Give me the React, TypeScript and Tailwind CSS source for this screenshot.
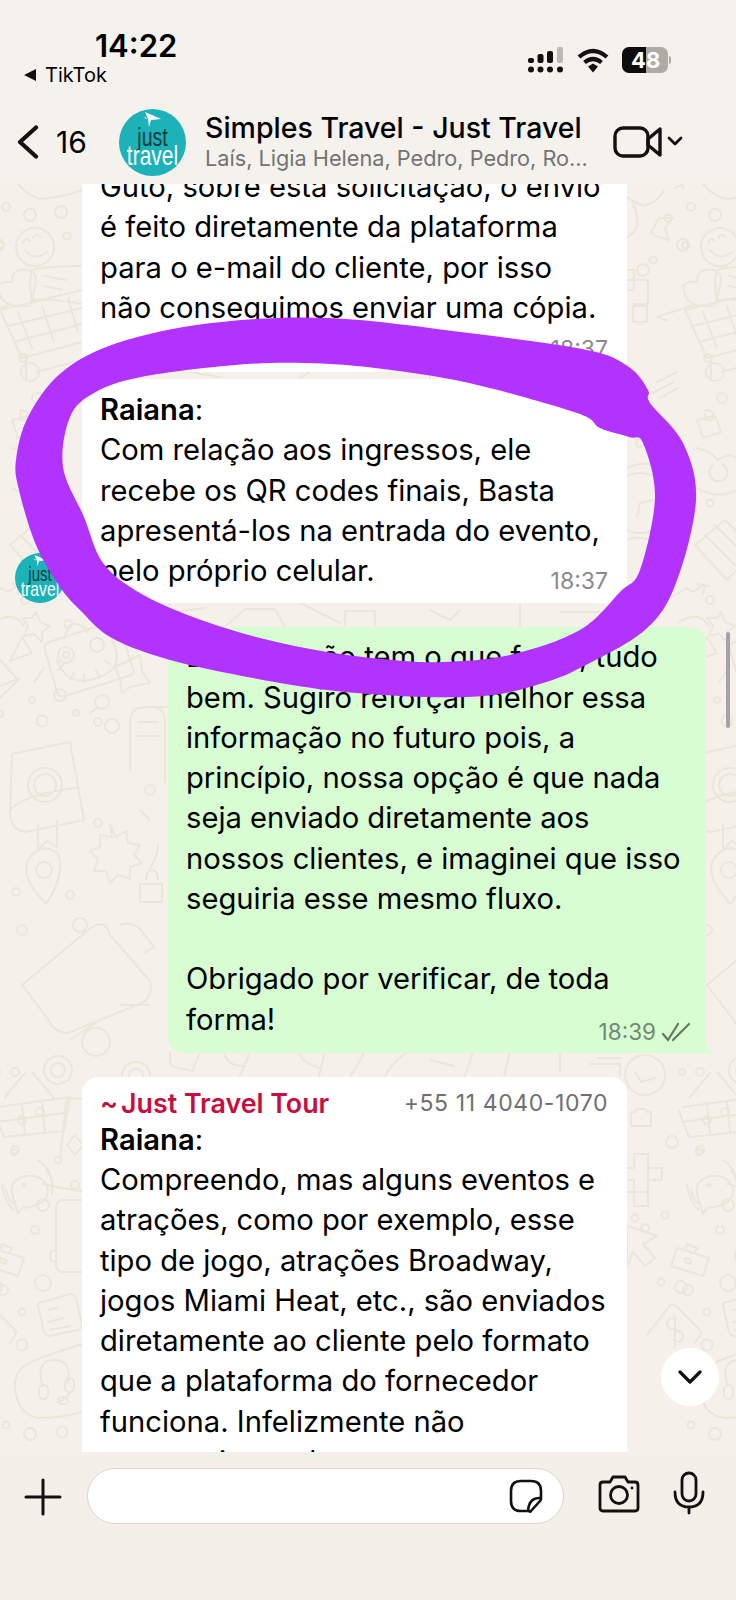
import React from "react";

const Line = ({ children }: { children: React.ReactNode }) => (
  <div className="h-[40.25px] leading-[40.25px] whitespace-nowrap">{children}</div>
);

const dots: [number, number, number][] = [
  [6, 207, 4], [30, 215, 6], [61, 212, 6], [67, 236, 3.5], [0, 245, 3], [23, 358, 4], [-32, 260, 3.5], [-42, 270, 6], [-2, 245, 6], [-17, 218, 3.5],
  [37, 398, 5], [25, 503, 3.5], [25, 600, 4], [-45, 443, 4], [32, 700, 3], [76, 713, 3], [42, 721, 5.5], [112, 726, 7], [0, 714, 3],
  [98, 722, 4], [150, 790, 5], [98, 823, 4], [22, 930, 5], [80, 925, 7], [70, 895, 4], [16, 892, 4], [22, 1120, 4], [40, 1112, 4],
  [15, 1072, 4], [15, 1150, 4], [58, 1160, 3.5], [75, 1185, 4], [43, 1205, 6], [35, 1230, 4], [43, 1283, 8], [22, 1312, 3.5], [22, 1345, 5.5], [3, 1290, 5], [6, 1425, 3.5], [30, 1434, 6], [62, 1432, 5.5],
  [-3, 1072, 3], [-13, 1142, 6], [14, 1152, 3], [-20, 1215, 3.5], [-24, 1282, 3.5], [-4, 1287, 6], [-50, 1218, 3.5], [-40, 1228, 4],
];

function Column() {
  return (
    <g>
      {dots.map((d, i) => (
        <circle key={i} cx={d[0]} cy={d[1]} r={d[2]} />
      ))}
      <path d="M-10 188q10-6 8 0M18 184q16 18 30 14 20-2 34-8" />
      <circle cx="35" cy="247" r="19" />
      <path d="M23 243q3-7 7-2M33 238q3-6 7-1M25 250q9 12 22 2" />
      <path d="M29 306q-26 2-29-12-6-14 12-12 0-14 14-12 14 0 8 20-2 12-5 16zM32 270q12-4 50-4M32 300q-4-18 0-30M32 300q20-2 50 4M44 276l22 4M44 286l18 4" />
      <path d="M0 310l82-20M0 310l22 48 60-16M18 312l14 36M42 306l12 36M68 298l10 34M8 326l74-18M14 342l68-18M26 356v24M36 372l46-12" />
      <circle cx="30" cy="372" r="9" />
      <path d="M-28 317l36-12M-18 320q-6 0-8-4" />
      <path d="M-34 232l8-14 14 0 -8 10 4 12-14-4z" />
      <path d="M-65 280h14v-10h-12M-65 290h14v-10h14v24h-14M-52 306h14v16h-14z" />
      <path d="M-65 190q10 12 24 16 14-4 20-16" />
      <path d="M-60 238q20-8 8-34" />
      <path d="M20 410q8 0 8 6v4h-8M12 420l18-4 6 16-18 6zM20 420v-4q0-6 4-6" />
      <path d="M-28 382l20-10M-25 398l18-10M-35 394l24-12" />
      <path d="M12 448q16 4 20 12 18-10 20 2M12 488q20 12 40 2M28 465a9 9 0 1 0 9-1l2 3" />
      <circle cx="-45" cy="503" r="30" />
      <path d="M-45 503l14-3M-45 503l-3 14M-60 540q20-6 30 4M-60 470q14-10 30-4" />
      <path d="M10 545l30-25 30 30-28 30zM20 535l30 30M30 525l30 30" />
      <path d="M-12 596l14-8 6 4 12-8 -2 10M12 584l12 2" />
      <path d="M-6 622q20-12 30 4" />
      <path d="M0 660l18 20-18 18M-10 690l30-12" />
      <path d="M22 637l10 16-22 8z" />
      <path d="M36 612l4 10 10 4-8 6 0 10-8-8-10 2 4-10-6-8 10 0z" />
      <path d="M49 642l62-20q6-2 8 4l14 42q2 6-4 8l-64 20q-6 2-8-4l-12-42q-2-6 4-8zM65 638q2-16 12-14 8 2 10 8M68 620a4 4 0 1 0 .1 0M44 668l-10 14" />
      <circle cx="66" cy="655" r="8" />
      <circle cx="66" cy="655" r="3" />
      <circle cx="97" cy="645" r="7" />
      <path d="M57 660q10 28 40 18t15-38M64 664l-6 6M74 672l-4 8M84 674v8M96 670l4 8M104 660l6 4" />
      <circle cx="60" cy="695" r="6" />
      <path d="M115 667l25-12 2 16 8 12-20 4-8 6-2-14z" />
      <circle cx="102" cy="702" r="7" />
      <path d="M97 708l-7 5" />
      <path d="M130 770v-48q0-15 16-15h22M152 707q13 0 13 15v60M138 722h20M138 736h20" />
      <path d="M12 754l58-12 14 78-58 12q-16-2-16-20zM10 810q14-16 66-22M38 825v24l9-8 10 6v-26" />
      <circle cx="45" cy="785" r="17" />
      <circle cx="45" cy="785" r="11" />
      <path d="M110 825l6 12 10-6 2 12 12 2-6 10 8 8-12 4 0 12-12-4-8 8-4-12-12 0 4-12-8-8 10-4 0-12 12 2z" />
      <path d="M140 810l10 10M150 868q8-12 8-24" />
      <path d="M28 860q14-20 30-6 8 20-12 50-26-26-18-44z" />
      <circle cx="44" cy="870" r="8" />
      <path d="M146 880q0-10 6-10t6 10M140 884h22v18h-22z" />
      <path d="M22 985l70-58q14-8 18 8l40 46q4 14-8 22l-74 30q-14 0-20-14l-26-34zM120 925q10-4 20 4l14 18-10 6M70 1040l30-20M120 1005h30" />
      <circle cx="58" cy="1070" r="14" />
      <circle cx="58" cy="1070" r="7" />
      <circle cx="96" cy="1042" r="14" />
      <circle cx="136" cy="1076" r="14" />
      <circle cx="136" cy="1076" r="7" />
      <path d="M60 1160l6-56q0-6 8-6l82 8q6 2 6 8l-8 66M42 1184q60 14 118 6" />
      <path d="M84 1134h44v38H84zM106 1124v48M84 1146h44M106 1122q-12-12-14 2 4 6 14-2 12-12 14 2-4 6-14-2" />
      <path d="M5 1097l20-24M32 1072l22 26M-2 1107l72-10M70 1097l-6 34-60 6-10-26M22 1105l3 30M42 1102l3 30M-3 1122l68-9" />
      <path d="M75 1135l8 10 -8 10-8-10z" />
      <path d="M14 1200q-8-20 12-24 18-2 22 14 0 16-26 18l-4 6z" />
      <path d="M46 1170q8 10 6 24M38 1160q14 10 14 24M6 1190q2 10 8 14M2 1184q2 18 12 26" />
      <circle cx="24" cy="1185" r="1.5" />
      <path d="M82 1200h-18q-8 0-8 8v56q0 8 8 8h18M56 1250q-6 0-6 6t6 6" />
      <path d="M-8 1248l32 10-6 18-32-10zM0 1250l2-6 10 4-2 4M0 1258l6 2v4l-6-2z" />
      <path d="M42 1302l28-8q4 0 6 4l6 26q0 4-4 6l-28 6q-4 0-6-4l-6-26q0-4 4-4zM48 1310l10-2M48 1322l16-4M50 1330l20-4" />
      <path d="M82 1344q-50 16-58 22-12 10-8 28 4 22 24 24 20 0 42-6" />
      <path d="M42 1384q-6-24 12-24t14 22" />
      <rect x="39" y="1385" width="9" height="14" rx="4.5" />
      <rect x="65" y="1378" width="9" height="14" rx="4.5" />
      <path d="M70 1392q-4 8-12 10" />
      <rect x="58" y="1397" width="10" height="7" rx="3.5" />
      <path d="M-38 1335l22-28q4-4 8 0l22 22q4 4 0 8l-4 6M-8 1320q-8-4-10 2t8 8 8 8-10 2M-10 1316v30" />
      <path d="M-58 1226l30 10-14 8 12 14-10 8-12-14-6 14z" />
      <path d="M-65 1168h14v-14h14v14h14v12h-14v-12M-37 1180v12h-14v-12M-65 1180h14M-65 1192h14v14h14v-14" />
      <circle cx="-40" cy="1075" r="20" />
      <path d="M-50 1072l6 10 14-4" />
      <path d="M-54 1112h4l2-3h8l2 3h4v14h-20z" />
    </g>
  );
}

function Doodles() {
  return (
    <svg className="absolute inset-0" width="736" height="1268" viewBox="0 184 736 1268" fill="none" stroke="#ece5da" strokeWidth="2" strokeLinecap="round" strokeLinejoin="round">
      <Column />
      <g transform="translate(685 0)">
        <Column />
      </g>
      <path d="M85 376l20 2M190 372l30 5M310 372l-10 6M430 373v6M530 374l10 5" />
      <path d="M175 612l30-4M225 627l20-18h30l10 18M300 603l40 20M345 627v-16h30v16M430 610l20 10 10-10M520 605v22M560 612h40v15" />
      <path d="M170 1052v10q0 6 20 8M200 1052l-8 20M225 1052q0 14 20 14M250 1052l-10 24M300 1052q0 10 20 16M325 1052l-6 24M350 1076q8-10 14-24M385 1076q6-12 22-24M430 1060l24 6M465 1076l8-24M510 1052l-6 24M560 1052v20M590 1064h30v12M598 1058h22" />
    </svg>
  );
}

function Avatar({ size }: { size: "lg" | "sm" }) {
  const lg = size === "lg";
  return (
    <div className={lg ? "relative w-[67px] h-[67px] rounded-full bg-[#1cb2b7] overflow-hidden shrink-0 text-white" : "relative w-[50px] h-[50px] rounded-full bg-[#1cb2b7] overflow-hidden shrink-0 text-white"}>
      <svg className={lg ? "absolute left-[24px] top-[2px] w-[20px] h-[18px]" : "absolute left-[18px] top-[1px] w-[15px] h-[14px]"} viewBox="0 0 20 18" fill="#ffffff">
        <path d="M2 1l16 7-10 1-2 7-1-8zM1 6l3 1-1 1z" />
      </svg>
      <div className={lg ? "absolute left-0 right-0 top-[15px] text-center text-[26px] leading-[26px] scale-x-75 text-[#0f3a3d] font-['Liberation_Sans',sans-serif]" : "absolute left-0 right-0 top-[11px] text-center text-[20px] leading-[20px] scale-x-75 text-[#0f3a3d] font-['Liberation_Sans',sans-serif]"}>just</div>
      <div className={lg ? "absolute left-[-6px] right-[-6px] top-[33px] text-center text-[28px] leading-[28px] scale-x-75 font-['Liberation_Sans',sans-serif]" : "absolute left-[-6px] right-[-6px] top-[25px] text-center text-[21px] leading-[21px] scale-x-75 font-['Liberation_Sans',sans-serif]"}>travel</div>
    </div>
  );
}

type P = [number, number];

const outerEdge: P[] = [
  [648, 390], [629, 367], [587, 350], [469, 333], [329, 318], [211, 323], [117, 343], [61, 373], [28, 417], [16, 460], [19, 490],
  [36, 545], [60, 587], [80, 610], [110, 637], [160, 657], [227, 673], [327, 690], [427, 697], [493, 695], [543, 683], [580, 668], [645, 630],
  [676, 583], [696, 500], [683, 443], [650, 403],
];
const innerEdge: P[] = [
  [643, 443], [655, 497], [640, 570], [620, 592], [580, 630], [510, 655], [443, 662], [393, 660], [327, 652], [260, 638], [193, 617], [140, 593], [103, 563], [84, 517],
  [63, 467], [70, 417], [94, 393], [141, 377], [235, 365], [305, 363], [375, 368], [469, 383], [577, 413], [600, 428], [629, 437],
];

function smooth(pts: P[]): string {
  const n = pts.length;
  let d = `M${pts[0][0]} ${pts[0][1]}`;
  for (let i = 0; i < n; i++) {
    const p0 = pts[(i - 1 + n) % n];
    const p1 = pts[i];
    const p2 = pts[(i + 1) % n];
    const p3 = pts[(i + 2) % n];
    const c1x = p1[0] + (p2[0] - p0[0]) / 6;
    const c1y = p1[1] + (p2[1] - p0[1]) / 6;
    const c2x = p2[0] - (p3[0] - p1[0]) / 6;
    const c2y = p2[1] - (p3[1] - p1[1]) / 6;
    d += `C${c1x.toFixed(1)} ${c1y.toFixed(1)} ${c2x.toFixed(1)} ${c2y.toFixed(1)} ${p2[0]} ${p2[1]}`;
  }
  return d + "Z";
}

export default function App() {
  return (
    <div className="relative w-[736px] h-[1600px] overflow-hidden flex flex-col bg-[#f4f1eb] text-black font-['Inter',sans-serif]">
      <header className="h-[184px] shrink-0 bg-[#f5f2ed] flex flex-col">
        <div className="h-[100px] flex justify-between px-[23px] pt-[28px] shrink-0">
          <div className="w-[200px]">
            <div className="pl-[72px] text-[31px] leading-[36px] font-semibold">14:22</div>
            <div className="flex items-center gap-[8px] h-[22px] text-[20px]">
              <svg width="14" height="14" viewBox="0 0 14 14"><path d="M13 1v12L1 7z" fill="#111" /></svg>
              <span>TikTok</span>
            </div>
          </div>
          <div className="flex items-center gap-[13px] h-[26px] mt-[19px] pr-[44px]">
            <svg width="36" height="26" viewBox="0 0 36 26" fill="#111">
              <rect x="0" y="11" width="6" height="5" rx="2" />
              <rect x="9.5" y="7" width="6" height="9" rx="2" />
              <rect x="19" y="4" width="6" height="12" rx="2" />
              <rect x="29" y="0" width="6" height="16" rx="2" fill="#bdbab5" />
              <circle cx="3" cy="22.5" r="3" />
              <circle cx="12.5" cy="22.5" r="3" />
              <circle cx="22" cy="22.5" r="3" />
              <circle cx="32" cy="22.5" r="3" />
            </svg>
            <svg width="32" height="25" viewBox="0 0 32 25" fill="none" stroke="#111" strokeWidth="4.2">
              <path d="M2 9q14-12 28 0M7.5 14.5q8.5-7 17 0" />
              <path d="M11 18.5l5-3 5 3-5 6z" fill="#111" stroke="none" />
            </svg>
            <div className="relative w-[47px] h-[26px]">
              <div className="flex w-[46px] h-[26px] rounded-[7px] overflow-hidden text-[22px] leading-[26px] font-bold text-white">
                <div className="w-[24px] bg-[#0d0d0d] text-right">4</div>
                <div className="flex-1 bg-[#aeaba6]">8</div>
              </div>
              <div className="absolute right-[-2px] top-[9px] w-[2px] h-[8px] rounded-r-full bg-[#aeaba6]" />
            </div>
          </div>
        </div>
        <div className="flex items-center h-[84px] pl-[17px]">
          <svg width="22" height="34" viewBox="0 0 22 34" fill="none" stroke="#111" strokeWidth="4.2" strokeLinecap="round" strokeLinejoin="round">
            <path d="M19 2.5L3 17l16 14.5" />
          </svg>
          <span className="ml-[17px] w-[63px] text-[30px] leading-[34px]">16</span>
          <Avatar size="lg" />
          <div className="ml-[19px] w-[393px] pb-[2px]">
            <div className="text-[28.5px] leading-[34px] font-medium whitespace-nowrap">Simples Travel - Just Travel</div>
            <div className="text-[21.7px] leading-[26px] text-[#737373] whitespace-nowrap">Laís, Ligia Helena, Pedro, Pedro, Ro...</div>
          </div>
          <svg className="ml-[15px]" width="72" height="34" viewBox="0 0 72 34" fill="none" stroke="#111" strokeWidth="3.4" strokeLinejoin="round" strokeLinecap="round">
            <rect x="2" y="3" width="33" height="28" rx="8" />
            <path d="M35 14l12-10v26L35 20z" />
            <path d="M56 13l6 6 6-6" strokeWidth="2.8" />
          </svg>
        </div>
      </header>

      <main className="relative flex-1 overflow-hidden bg-[#f5f1ea] text-[29.2px]">
        <Doodles />
        <div className="relative flex flex-col">
          <div className="relative ml-[82px] w-[545px] mt-[-17px] bg-white pl-[18px] pt-0 pb-[44px]">
            <Line>Guto, sobre esta solicitação, o envio</Line>
            <Line>é feito diretamente da plataforma</Line>
            <Line>para o e-mail do cliente, por isso</Line>
            <Line>não conseguimos enviar uma cópia.</Line>
            <span className="absolute right-[19px] bottom-[9px] text-[23px] leading-[28px] text-[#8a8a8a]">18:37</span>
          </div>
          <div className="flex items-end mt-[7px]">
            <div className="ml-[15px] w-[67px]">
              <Avatar size="sm" />
            </div>
            <div className="relative w-[545px] bg-white rounded-[16px] pl-[18px] pt-[11px] pb-[12px]">
              <Line><span className="font-semibold">Raiana</span>:</Line>
              <Line>Com relação aos ingressos, ele</Line>
              <Line>recebe os QR codes finais, Basta</Line>
              <Line>apresentá-los na entrada do evento,</Line>
              <Line>pelo próprio celular.</Line>
              <span className="absolute right-[19px] bottom-[8px] text-[23px] leading-[28px] text-[#8a8a8a]">18:37</span>
            </div>
          </div>
          <div className="relative ml-[168px] w-[538px] mt-[24px] bg-[#d8fdd2] rounded-[16px] rounded-br-none pl-[18px] pt-[10px] pb-[13px]">
            <Line>Bem, se não tem o que fazer, tudo</Line>
            <Line>bem. Sugiro reforçar melhor essa</Line>
            <Line>informação no futuro pois, a</Line>
            <Line>princípio, nossa opção é que nada</Line>
            <Line>seja enviado diretamente aos</Line>
            <Line>nossos clientes, e imaginei que isso</Line>
            <Line>seguiria esse mesmo fluxo.</Line>
            <Line>{"\u00a0"}</Line>
            <Line>Obrigado por verificar, de toda</Line>
            <Line>forma!</Line>
            <div className="absolute right-[16px] bottom-[7px] flex items-center gap-[6px] text-[22.5px] leading-[28px] text-[#6f8a70]">
              <span>18:39</span>
              <svg width="28" height="20" viewBox="0 0 28 20" fill="none" stroke="#5f7a61" strokeWidth="2.2" strokeLinecap="round">
                <path d="M1 12l5 6L16 2M11 18L27 2" />
              </svg>
            </div>
            <svg className="absolute right-[-10px] bottom-0" width="11" height="14" viewBox="0 0 11 14">
              <path d="M0 0q1 11 11 14H0z" fill="#d8fdd2" />
            </svg>
          </div>
          <div className="ml-[82px] w-[545px] mt-[24px] bg-white rounded-[16px] pl-[18px] pr-[19px] pt-[8px] pb-[20px]">
            <div className="flex items-center justify-between h-[36px] mb-[-1px]">
              <span className="text-[#c5103f] text-[26.8px] font-semibold">~<span className="ml-[3px]">Just Travel Tour</span></span>
              <span className="text-[#6f6f6f] text-[23px] tracking-[0.6px]">+55 11 4040-1070</span>
            </div>
            <Line><span className="font-semibold">Raiana</span>:</Line>
            <Line>Compreendo, mas alguns eventos e</Line>
            <Line>atrações, como por exemplo, esse</Line>
            <Line>tipo de jogo, atrações Broadway,</Line>
            <Line>jogos Miami Heat, etc., são enviados</Line>
            <Line>diretamente ao cliente pelo formato</Line>
            <Line>que a plataforma do fornecedor</Line>
            <Line>funciona. Infelizmente não</Line>
            <Line>conseguimos alterar</Line>
          </div>
        </div>
        <button className="absolute left-[661px] top-[1164px] w-[58px] h-[58px] rounded-full bg-white flex items-center justify-center">
          <svg width="24" height="14" viewBox="0 0 24 14" fill="none" stroke="#111" strokeWidth="3.2" strokeLinecap="round" strokeLinejoin="round">
            <path d="M2 2l10 10L22 2" />
          </svg>
        </button>
        <div className="absolute left-[726px] top-[448px] w-[4px] h-[96px] rounded-full bg-[#a3a3a3]" />
      </main>

      <footer className="h-[148px] shrink-0 bg-[#f3f0ea] flex items-start pt-[16px]">
        <svg className="ml-[24px] mt-[10px]" width="38" height="38" viewBox="0 0 38 38" fill="none" stroke="#111" strokeWidth="3" strokeLinecap="round">
          <path d="M19 2v34M2 19h34" />
        </svg>
        <div className="ml-[25px] w-[477px] h-[56px] rounded-full bg-white border border-[#d8d5cf] flex items-center justify-end pr-[20px]">
          <svg width="34" height="34" viewBox="0 0 34 34" fill="none" stroke="#111" strokeWidth="2.6" strokeLinejoin="round">
            <path d="M12 2h10q10 0 10 10v8q0 1-1 2L22 32q-1 1-2 0h-8Q2 32 2 22V12Q2 2 12 2z" />
            <path d="M32 19q-12-1-13 13" />
          </svg>
        </div>
        <svg className="ml-[34px] mt-[7px]" width="42" height="38" viewBox="0 0 42 38" fill="none" stroke="#111" strokeWidth="2.8" strokeLinejoin="round">
          <path d="M5 7h7l3-5h12l3 5h7q3 0 3 3v23q0 3-3 3H5q-3 0-3-3V10q0-3 3-3z" />
          <circle cx="21" cy="20" r="8.5" />
          <circle cx="34" cy="13" r="1.4" fill="#111" stroke="none" />
        </svg>
        <svg className="ml-[33px] mt-[3px]" width="32" height="44" viewBox="0 0 32 44" fill="none" stroke="#111" strokeWidth="2.8" strokeLinecap="round">
          <rect x="9" y="2" width="14" height="28" rx="7" />
          <path d="M2 21q0 15 14 15t14-15M16 36v6" />
        </svg>
      </footer>

      <svg className="absolute left-0 top-0 pointer-events-none" width="736" height="1600" viewBox="0 0 736 1600">
        <path fill="#b233fe" fillRule="evenodd" d={smooth(outerEdge) + smooth(innerEdge)} />
      </svg>
    </div>
  );
}
